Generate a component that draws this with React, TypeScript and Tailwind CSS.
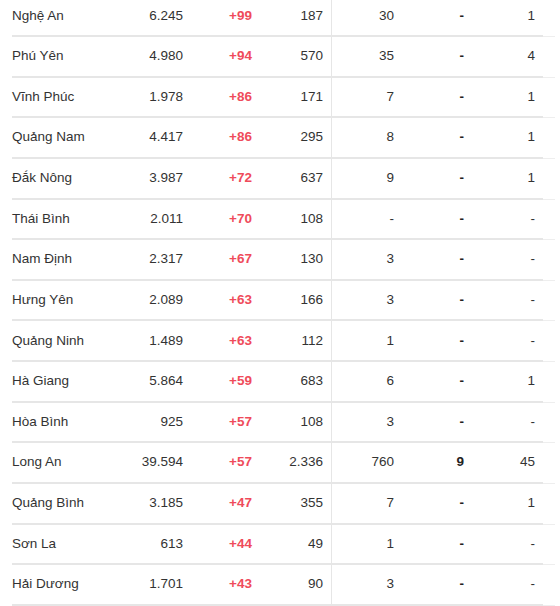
import React from 'react';

type Row = [string, string, string, string, string, string, string];

const rows: Row[] = [
  ['Nghệ An', '6.245', '+99', '187', '30', '-', '1'],
  ['Phú Yên', '4.980', '+94', '570', '35', '-', '4'],
  ['Vĩnh Phúc', '1.978', '+86', '171', '7', '-', '1'],
  ['Quảng Nam', '4.417', '+86', '295', '8', '-', '1'],
  ['Đắk Nông', '3.987', '+72', '637', '9', '-', '1'],
  ['Thái Bình', '2.011', '+70', '108', '-', '-', '-'],
  ['Nam Định', '2.317', '+67', '130', '3', '-', '-'],
  ['Hưng Yên', '2.089', '+63', '166', '3', '-', '-'],
  ['Quảng Ninh', '1.489', '+63', '112', '1', '-', '-'],
  ['Hà Giang', '5.864', '+59', '683', '6', '-', '1'],
  ['Hòa Bình', '925', '+57', '108', '3', '-', '-'],
  ['Long An', '39.594', '+57', '2.336', '760', '9', '45'],
  ['Quảng Bình', '3.185', '+47', '355', '7', '-', '1'],
  ['Sơn La', '613', '+44', '49', '1', '-', '-'],
  ['Hải Dương', '1.701', '+43', '90', '3', '-', '-'],
];

export default function App() {
  return (
    <div className="w-[560px] h-[606px] overflow-hidden bg-white text-[#333] text-[13.5px] font-['Liberation_Sans',Arial,sans-serif]">
      <div className="flex mt-[-3.64px]">
        {/* provinces + cases */}
        <div className="w-[331px] pl-[12px]">
          {rows.map((r) => (
            <div key={r[0]} className="flex items-center h-[40.64px] border-b-2 border-[#e6e6e6] pr-[8px]">
              <div className="flex-1">{r[0]}</div>
              <div className="w-[63px] text-right">{r[1]}</div>
              <div className="w-[69px] text-right font-bold text-[#ef4b5b]">{r[2]}</div>
              <div className="w-[71px] text-right">{r[3]}</div>
            </div>
          ))}
        </div>
        {/* recovered / deaths */}
        <div className="flex-1 border-l border-[#e6e6e6]">
          {rows.map((r) => (
            <div key={r[0]} className="flex items-end h-[40.64px]">
              <div className="flex items-center h-full w-[211px] border-b-2 border-[#e6e6e6] pr-[8px]">
                <div className="w-[62px] text-right">{r[4]}</div>
                <div className="w-[70px] text-right font-bold text-[#222]">{r[5]}</div>
                <div className="w-[71px] text-right">{r[6]}</div>
              </div>
              <div className="w-[12px] border-b border-[#eeeeee]" />
            </div>
          ))}
        </div>
      </div>
    </div>
  );
}
